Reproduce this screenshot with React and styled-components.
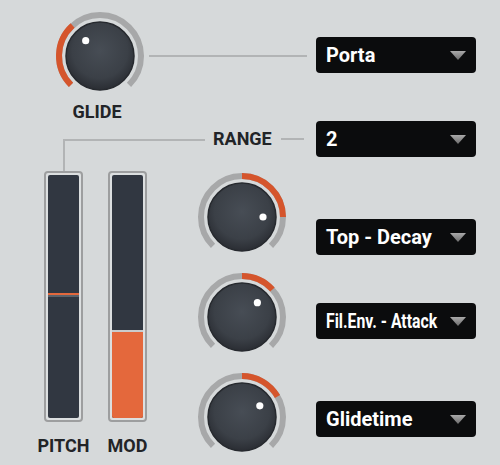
import React from "react";
import styled, { createGlobalStyle } from "styled-components";

const GlobalStyle = createGlobalStyle`
  html, body {
    margin: 0;
    padding: 0;
    background: #d6d9da;
  }
  body {
    font-family: Roboto, "Liberation Sans", Arial, sans-serif;
  }
`;

// angle in degrees, clockwise from 12 o'clock
const polar = (cx, cy, r, deg) => {
  const a = ((deg - 90) * Math.PI) / 180;
  return [cx + r * Math.cos(a), cy + r * Math.sin(a)];
};

const arc = (cx, cy, r, from, to) => {
  const [x1, y1] = polar(cx, cy, r, from);
  const [x2, y2] = polar(cx, cy, r, to);
  const large = to - from > 180 ? 1 : 0;
  return `M ${x1} ${y1} A ${r} ${r} 0 ${large} 1 ${x2} ${y2}`;
};

const Knob = ({ id, from, to, dot }) => {
  const [dx, dy] = polar(45, 45, 21, dot);
  return (
    <KnobSvg width="90" height="90" viewBox="0 0 90 90">
      <defs>
        <radialGradient id={id} cx="50%" cy="42%" r="58%">
          <stop offset="0%" stopColor="#474d55" />
          <stop offset="70%" stopColor="#3b4047" />
          <stop offset="100%" stopColor="#2a2d33" />
        </radialGradient>
      </defs>
      <path d={arc(45, 45, 41, -135, 135)} fill="none" stroke="#a7a8a9" strokeWidth="6" />
      <path d={arc(45, 45, 41, from, to)} fill="none" stroke="#d5552c" strokeWidth="6" />
      <circle cx="45" cy="45" r="34" fill={`url(#${id})`} stroke="#26292e" strokeWidth="1.5" />
      <circle cx={dx} cy={dy} r="3.6" fill="#ffffff" />
    </KnobSvg>
  );
};

const Caret = () => (
  <CaretSvg width="16" height="9" viewBox="0 0 16 9">
    <defs>
      <linearGradient id="caretFill" x1="0" y1="0" x2="0" y2="1">
        <stop offset="0%" stopColor="#a9a9a9" />
        <stop offset="100%" stopColor="#6c6c6c" />
      </linearGradient>
    </defs>
    <polygon points="0,0 16,0 8,9" fill="url(#caretFill)" />
  </CaretSvg>
);

const Dropdown = ({ text, squeeze, top }) => (
  <Select $top={top}>
    <SelectText $squeeze={squeeze}>{text}</SelectText>
    <Caret />
  </Select>
);

const App = () => {
  return (
    <>
      <GlobalStyle />
      <Panel>
        <TopRow>
          <GlideCol>
            <Knob id="kGlide" from={-135} to={-42} dot={-43} />
            <Label $mt={2} $shift={6}>GLIDE</Label>
          </GlideCol>
          <Wire $m="44px 9px 0 4px" />
          <Dropdown text="Porta" top={26} />
        </TopRow>

        <RangeRow>
          <Elbow />
          <RangeLabel>RANGE</RangeLabel>
          <Wire $m="0 12px 0 0" />
          <Dropdown text="2" />
        </RangeRow>

        <Lower>
          <SliderGroup>
            <SliderCol>
              <Stem />
              <Slider>
                <Track>
                  <Marker $top={118} />
                </Track>
              </Slider>
              <Label $mt={15}>PITCH</Label>
            </SliderCol>
            <SliderCol>
              <Stem $hidden />
              <Slider>
                <Track>
                  <Fill $h={88} />
                </Track>
              </Slider>
              <Label $mt={15}>MOD</Label>
            </SliderCol>
          </SliderGroup>

          <KnobStack>
            <KnobRow>
              <Knob id="k1" from={0} to={90} dot={90} />
              <Dropdown text="Top - Decay" top={47} />
            </KnobRow>
            <KnobRow>
              <Knob id="k2" from={0} to={48} dot={47} />
              <Dropdown text="Fil.Env. - Attack" squeeze={0.79} top={31} />
            </KnobRow>
            <KnobRow>
              <Knob id="k3" from={0} to={60} dot={58} />
              <Dropdown text="Glidetime" top={29} />
            </KnobRow>
          </KnobStack>
        </Lower>
      </Panel>
    </>
  );
};

const Panel = styled.div`
  width: 500px;
  height: 465px;
  box-sizing: border-box;
  padding: 11px 24px 0 0;
  display: flex;
  flex-direction: column;
  overflow: hidden;
`;

const TopRow = styled.div`
  display: flex;
  align-items: flex-start;
  padding-left: 55px;
`;

const GlideCol = styled.div`
  display: flex;
  flex-direction: column;
  align-items: center;
  width: 90px;
`;

const KnobSvg = styled.svg`
  display: block;
  flex-shrink: 0;
`;

const Label = styled.div`
  font-weight: 700;
  font-size: 18px;
  line-height: 18px;
  color: #222427;
  margin-top: ${(p) => p.$mt || 0}px;
  padding-right: ${(p) => p.$shift || 0}px;
  white-space: nowrap;
`;

const Wire = styled.div`
  flex: 1;
  height: 2px;
  background: #b2b4b5;
  margin: ${(p) => p.$m || 0};
`;

const Select = styled.div`
  width: 160px;
  height: 36px;
  flex-shrink: 0;
  box-sizing: border-box;
  margin-top: ${(p) => p.$top || 0}px;
  padding: 0 10px;
  background: #0b0c0d;
  border-radius: 4px;
  display: flex;
  align-items: center;
`;

const SelectText = styled.span`
  flex: 1;
  min-width: 0;
  color: #ffffff;
  font-weight: 700;
  font-size: 20px;
  white-space: nowrap;
  transform: scaleX(${(p) => p.$squeeze || 1});
  transform-origin: left center;
`;

const CaretSvg = styled.svg`
  display: block;
  flex-shrink: 0;
`;

const RangeRow = styled.div`
  display: flex;
  align-items: center;
  height: 36px;
  padding-left: 63px;
`;

const Elbow = styled.div`
  align-self: stretch;
  width: 142px;
  margin-top: 18px;
  box-sizing: border-box;
  border-top: 2px solid #b2b4b5;
  border-left: 2px solid #b2b4b5;
`;

const RangeLabel = styled(Label)`
  margin: 0 9px 0 8px;
`;

const Lower = styled.div`
  display: flex;
  align-items: flex-start;
  padding-left: 44px;
`;

const SliderGroup = styled.div`
  display: flex;
  gap: 25px;
`;

const SliderCol = styled.div`
  width: 39px;
  display: flex;
  flex-direction: column;
  align-items: center;
`;

const Stem = styled.div`
  width: 2px;
  height: 14px;
  background: ${(p) => (p.$hidden ? "transparent" : "#b2b4b5")};
`;

const Slider = styled.div`
  width: 39px;
  height: 251px;
  flex-shrink: 0;
  box-sizing: border-box;
  border: 2px solid #9d9e9f;
  border-radius: 4px;
  padding: 2px;
  background: #dcdfe0;
  display: flex;
`;

const Track = styled.div`
  flex: 1;
  position: relative;
  background: #313741;
  border-radius: 2px;
  display: flex;
  flex-direction: column;
  justify-content: flex-end;
  overflow: hidden;
`;

const Marker = styled.div`
  position: absolute;
  left: 0;
  right: 0;
  top: ${(p) => p.$top}px;
  height: 2px;
  background: #e4683c;
  border-bottom: 2px solid #5d636b;
`;

const Fill = styled.div`
  height: ${(p) => p.$h}px;
  box-sizing: border-box;
  background: #e4683c;
  border-top: 2px solid #c9cccd;
`;

const KnobStack = styled.div`
  display: flex;
  flex-direction: column;
  gap: 10px;
  margin-left: 50px;
  padding-top: 15px;
`;

const KnobRow = styled.div`
  display: flex;
  align-items: flex-start;
  gap: 29px;
`;

export default App;
